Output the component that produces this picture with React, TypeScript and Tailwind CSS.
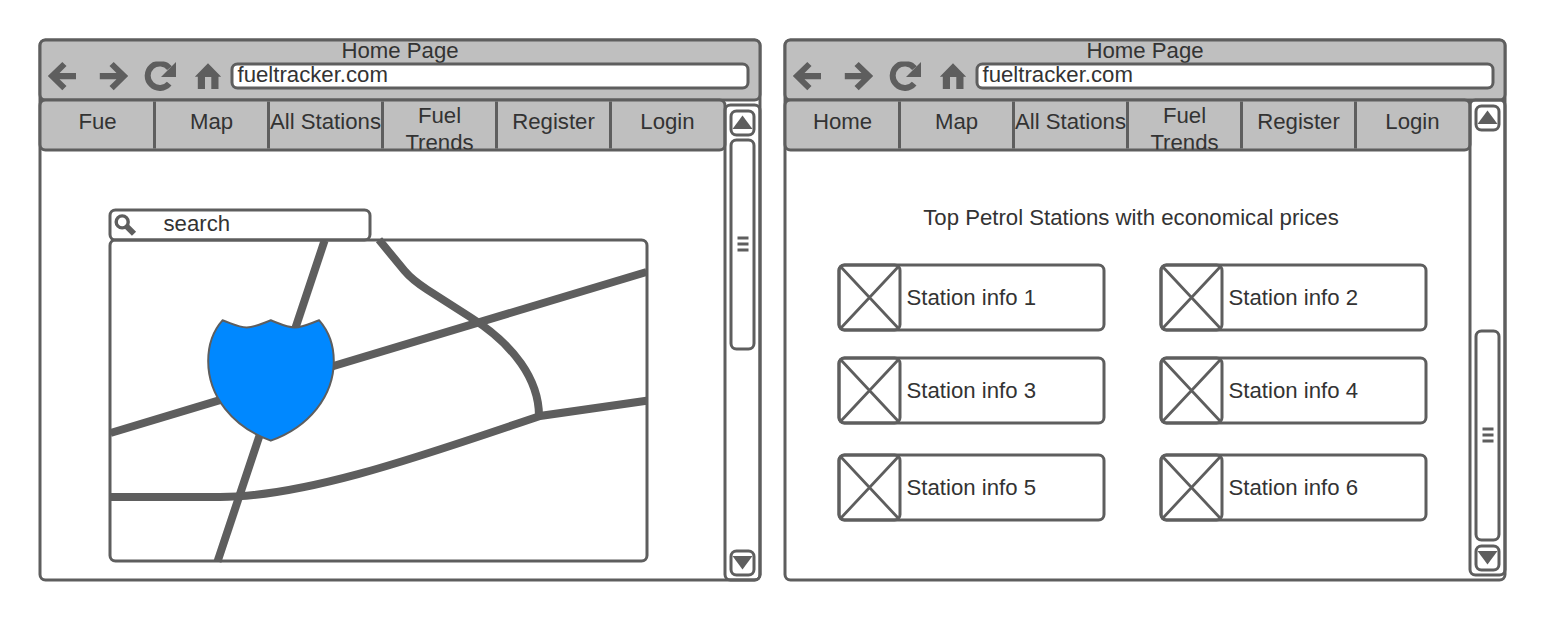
import type { ReactNode } from "react";

const FRAME = "border-[3px] border-[#5e5e5e]";

function Toolbar() {
  return (
    <div className="flex items-start">
      <svg className="-mt-[1px] h-[34px] w-[189px] shrink-0" viewBox="41.5 61.5 189 34" fill="#5e5e5e">
        <path d="M47.8 76 62.3 61.9 66.5 65.9 59.5 73H76V79.2H59.5L66.5 86.1 62.3 90.2Z" />
        <path d="M128.2 76 113.7 61.9 109.5 65.9 116.5 73H99.8V79.2H116.5L109.5 86.1 113.7 90.2Z" />
        <path d="M169.2 83.6A12.2 12.2 0 1 1 169.5 68.2" fill="none" stroke="#5e5e5e" strokeWidth="6" />
        <path d="M176 62V77H161Z" />
        <path d="M208 63.3 221.2 76.7H218.5V89H211.3V77H205V89H197.8V76.7H194.8Z" />
      </svg>
      <div className={`flex h-[27px] w-[519px] items-center rounded-[7px] bg-white pl-[4px] ${FRAME}`}>
        <span className="-mt-[5px]">fueltracker.com</span>
      </div>
    </div>
  );
}

function Tabs({ labels }: { labels: string[] }) {
  return (
    <nav className={`flex h-[53px] w-[688px] rounded-[7px] bg-[#bfbfbf] ${FRAME}`}>
      {labels.map((label) => (
        <div
          key={label}
          className="flex h-[47px] w-[114px] shrink-0 translate-x-[0.5px] items-start justify-center border-r-[3px] border-[#5e5e5e] text-center last:w-[111px] last:border-r-0"
        >
          {label.startsWith("Fuel ") ? (
            <span className="h-[48px] w-[90px] overflow-hidden">{label}</span>
          ) : (
            <span className="-mx-1 whitespace-nowrap pt-[6px]">{label}</span>
          )}
        </div>
      ))}
    </nav>
  );
}

function ScrollButton({ down = false }: { down?: boolean }) {
  return (
    <div className={`flex h-[27px] w-[26px] shrink-0 items-start justify-center rounded-[7px] bg-white ${FRAME}`}>
      <svg
        className={`h-[14px] w-[22px] shrink-0 overflow-visible ${down ? "mt-[3px] rotate-180" : "mt-[3px]"}`}
        viewBox="0 0 22 14"
      >
        <path d="M11 0 21 13.5H1Z" fill="#5e5e5e" />
      </svg>
    </div>
  );
}

function Scrollbar({ atEnd = false }: { atEnd?: boolean }) {
  return (
    <div
      className={`-ml-[3px] flex h-[478px] w-[38px] flex-col items-center rounded-[7px] pt-[3px] ${FRAME} ${
        atEnd ? "mt-0" : "mt-[5px]"
      }`}
    >
      <ScrollButton />
      <div
        className={`flex h-[212px] w-[26px] shrink-0 flex-col items-center justify-center gap-[3px] rounded-[7px] pb-px ${FRAME} ${
          atEnd ? "mt-[198px]" : "mt-[2px]"
        }`}
      >
        <i className="h-[3px] w-[11px] bg-[#5e5e5e]" />
        <i className="h-[3px] w-[11px] bg-[#5e5e5e]" />
        <i className="h-[3px] w-[11px] bg-[#5e5e5e]" />
      </div>
      <div className={atEnd ? "mt-[3px]" : "mt-[199px]"}>
        <ScrollButton down />
      </div>
    </div>
  );
}

function BrowserWindow({ tabs, atEnd, children }: { tabs: string[]; atEnd?: boolean; children: ReactNode }) {
  return (
    <section className={`h-[543px] w-[723px] shrink-0 rounded-[7px] bg-white ${FRAME}`}>
      <header className={`-mx-[3px] -mt-[3px] h-[63px] rounded-[7px] bg-[#bfbfbf] ${FRAME}`}>
        <h1 className="-mt-[5px] h-[27px] text-center">Home Page</h1>
        <div className="-mt-px">
          <Toolbar />
        </div>
      </header>
      <div className="-mx-[3px] -mt-[3px] flex items-start">
        <main className="w-[688px] shrink-0">
          <Tabs labels={tabs} />
          {children}
        </main>
        <Scrollbar atEnd={atEnd} />
      </div>
    </section>
  );
}

function MapPanel() {
  return (
    <div className="ml-[70px] mt-[57px]">
      <div className={`flex h-[33px] w-[263px] items-center rounded-[7px] bg-white ${FRAME}`}>
        <svg className="h-[27px] w-[30px] shrink-0" viewBox="111.5 211.5 30 27" fill="none" stroke="#5e5e5e">
          <circle cx="122.2" cy="221.9" r="6" strokeWidth="3.4" />
          <path d="M126.5 226.3 134 233.8" strokeWidth="5.8" />
        </svg>
        <span className="-mt-[5px] pl-[22px]">search</span>
      </div>
      <div className={`-mt-[3px] h-[324px] w-[540px] rounded-[7px] ${FRAME}`}>
        <svg
          className="-ml-[3px] -mt-[3px] h-[324px] w-[540px] overflow-visible"
          viewBox="108.5 238.5 540 324"
          fill="none"
          stroke="#5e5e5e"
          strokeWidth="8"
        >
          <path d="M110.5 433 646.5 272" />
          <path d="M324.6 240.5 217.5 561.5" />
          <path d="M379 239.8 404.5 270.8C410.5 278 417 283 427 289.5L470 317C514 344.5 539 380 539 416" />
          <path d="M110.5 497H220C308 497 430 453 540 416L646.5 400.8" />
          <path
            d="M222.5 320.3C233 324 239 327.4 246.7 327.4S261 324 270.8 320.3C280.5 324 287 327.4 294.8 327.4S309 324 319.2 320.3C329 331.5 333.8 346.5 333.8 361 333.8 396 309 427 270.8 440.6 232.5 427 208.2 396 208.2 361 208.2 346.5 212.5 331.5 222.5 320.3Z"
            fill="#0088ff"
            strokeWidth="2"
          />
        </svg>
      </div>
    </div>
  );
}

function StationCard({ name }: { name: string }) {
  return (
    <div className={`flex h-[68px] w-[268px] items-center rounded-[7px] ${FRAME}`}>
      <div className={`-my-[3px] -ml-[3px] h-[68px] w-[64px] shrink-0 rounded-[7px] ${FRAME}`}>
        <svg className="h-full w-full overflow-visible" viewBox="0 0 58 62" stroke="#5e5e5e" strokeWidth="2.8">
          <path d="M-.5 -.5 58.5 62.5M58.5 -.5 -.5 62.5" />
        </svg>
      </div>
      <span className="-mt-[2px] pl-[5px]">{name}</span>
    </div>
  );
}

function StationList() {
  return (
    <div>
      <h2 className="mt-[52px] pl-[7px] text-center">Top Petrol Stations with economical prices</h2>
      <div className="ml-[54px] mt-[33px] grid grid-cols-[322px_268px] grid-rows-[93px_97px_68px]">
        {[1, 2, 3, 4, 5, 6].map((n) => (
          <StationCard key={n} name={`Station info ${n}`} />
        ))}
      </div>
    </div>
  );
}

export default function App() {
  return (
    <div className="h-[620px] w-[1545px] overflow-hidden bg-white">
      <div className="flex -translate-x-[0.5px] -translate-y-[0.5px] gap-[22px] pl-[39px] pt-[39px] font-['Liberation_Sans',Arial,sans-serif] text-[22.2px] leading-[27px] text-[#333333]">
        <BrowserWindow tabs={["Fue", "Map", "All Stations", "Fuel Trends", "Register", "Login"]}>
          <MapPanel />
        </BrowserWindow>
        <BrowserWindow tabs={["Home", "Map", "All Stations", "Fuel Trends", "Register", "Login"]} atEnd>
          <StationList />
        </BrowserWindow>
      </div>
    </div>
  );
}
